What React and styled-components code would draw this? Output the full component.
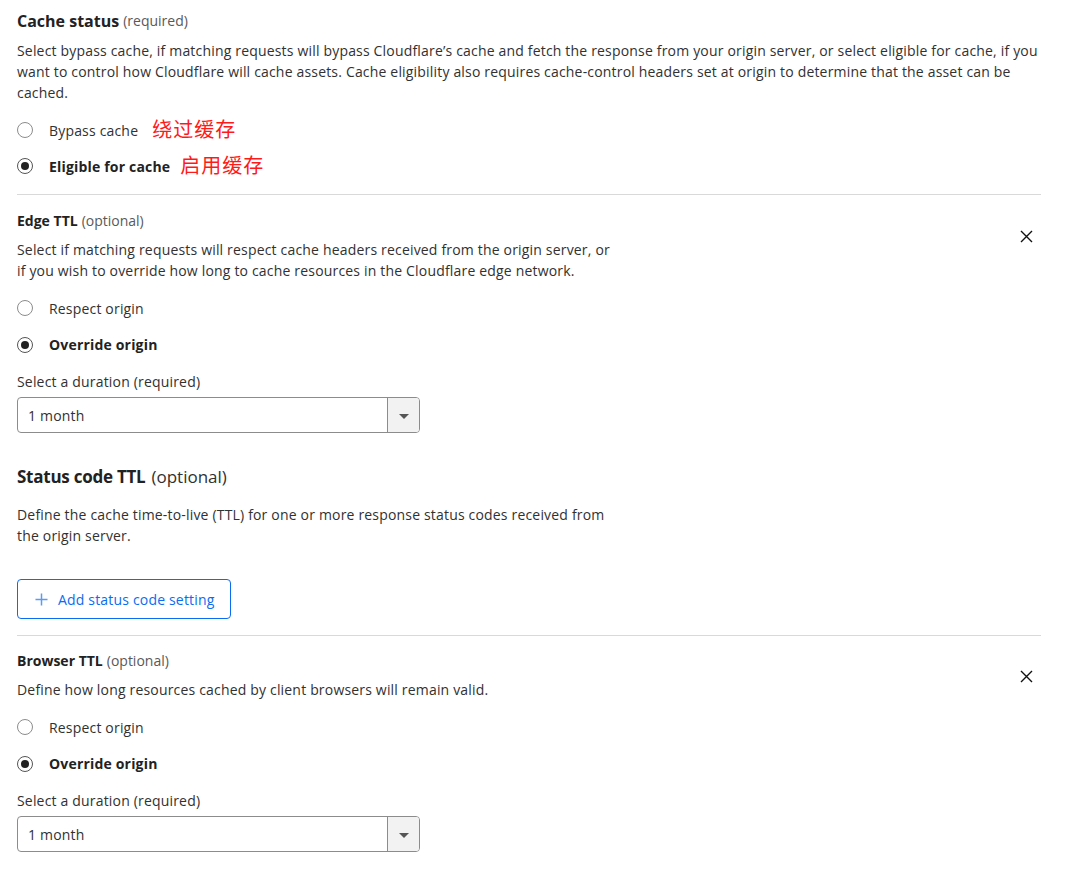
import React from "react";
import styled, { createGlobalStyle } from "styled-components";

const Global = createGlobalStyle`
  html, body { margin: 0; padding: 0; background: #fff; }
  body {
    font-family: "Open Sans", "Noto Sans", "Noto Sans CJK SC", sans-serif;
    color: #313131;
    letter-spacing: 0.18px;
    -webkit-font-smoothing: antialiased;
  }
  * { box-sizing: border-box; }
`;

const Page = styled.div`
  width: 1024px;
  margin-left: 17px;
  padding-top: 10px;
  display: flex;
  flex-direction: column;
`;

const Section = styled.section`
  display: grid;
  grid-template-columns: 1fr auto;
  padding: ${(p) => p.$pad || "0"};
`;

const Content = styled.div`
  display: flex;
  flex-direction: column;
`;

const Title = styled.div`
  font-size: ${(p) => (p.$large ? "17px" : p.$mid ? "16px" : "14px")};
  line-height: ${(p) => (p.$large ? "24px" : "22px")};
  height: ${(p) => (p.$large ? "24px" : p.$mid ? "22px" : "20px")};
  display: flex;
  align-items: center;
  gap: ${(p) => (p.$large ? "6px" : "4px")};
  b {
    font-weight: 700;
    color: #222;
    letter-spacing: ${(p) => (p.$large ? "-0.25px" : "0")};
  }
  span {
    font-weight: 400;
    color: ${(p) => (p.$large ? "#313131" : "#595959")};
    font-size: ${(p) => (p.$large ? "17px" : "14px")};
    letter-spacing: 0;
  }
`;

const Desc = styled.p`
  margin: ${(p) => p.$m || "8px 0 0"};
  font-size: 14px;
  line-height: 21px;
  max-width: ${(p) => p.$w || "none"};
  color: #313131;
`;

const Radios = styled.div`
  display: flex;
  flex-direction: column;
  margin-top: ${(p) => p.$mt || "9px"};
`;

const RadioRow = styled.label`
  display: flex;
  align-items: center;
  height: ${(p) => p.$h || "36.5px"};
  font-size: 14px;
  font-weight: ${(p) => (p.$checked ? 700 : 400)};
  color: ${(p) => (p.$checked ? "#222" : "#313131")};
`;

const Circle = styled.span`
  width: 16px;
  height: 16px;
  border-radius: 50%;
  border: 1px solid ${(p) => (p.$checked ? "#555" : "#8c8c8c")};
  margin-right: 16px;
  display: flex;
  align-items: center;
  justify-content: center;
  flex-shrink: 0;
  &::after {
    content: "";
    width: 8px;
    height: 8px;
    border-radius: 50%;
    background: #222;
    display: ${(p) => (p.$checked ? "block" : "none")};
  }
`;

const Note = styled.span`
  font-family: "Noto Sans CJK SC", sans-serif;
  color: #ff1a1a;
  font-size: 20px;
  letter-spacing: 1px;
  font-weight: 400;
  margin-left: ${(p) => p.$ml || "14px"};
  position: relative;
  top: -2px;
`;

const Divider = styled.hr`
  border: 0;
  border-top: 1px solid #d9d9d9;
  margin: ${(p) => p.$m || "0"};
  width: 1024px;
`;

const FieldLabel = styled.div`
  font-size: 14px;
  line-height: 20px;
  margin-top: 9px;
`;

const Select = styled.div`
  margin-top: 5px;
  width: 403px;
  height: 36px;
  border: 1px solid #8c8c8c;
  border-radius: 4px;
  display: flex;
  overflow: hidden;
`;

const SelectValue = styled.div`
  flex: 1;
  display: flex;
  align-items: center;
  padding-left: 10px;
  font-size: 14px;
  color: #313131;
`;

const SelectArrow = styled.div`
  width: 32px;
  border-left: 1px solid #8c8c8c;
  background: #f2f2f2;
  display: flex;
  align-items: center;
  justify-content: center;
  &::after {
    content: "";
    border-left: 5px solid transparent;
    border-right: 5px solid transparent;
    border-top: 5px solid #555;
    margin-top: 2px;
  }
`;

const CloseBtn = styled.button`
  background: none;
  border: 0;
  padding: 0;
  margin: ${(p) => p.$m || "0"};
  width: 20px;
  height: 20px;
  display: flex;
  align-items: center;
  justify-content: center;
  cursor: pointer;
  align-self: start;
`;

const AddButton = styled.button`
  align-self: flex-start;
  margin-top: 33px;
  height: 40px;
  padding: 0 15px 0 17px;
  border: 1px solid #0a6cf0;
  border-radius: 4px;
  background: #fff;
  color: #0a6cf0;
  font-family: inherit;
  font-size: 14px;
  letter-spacing: 0.18px;
  display: flex;
  align-items: center;
  gap: 10px;
  cursor: pointer;
`;

const CloseIcon = () => (
  <svg width="13" height="13" viewBox="0 0 13 13">
    <path d="M1 1L12 12M12 1L1 12" stroke="#111" strokeWidth="1.4" />
  </svg>
);

const PlusIcon = () => (
  <svg width="13" height="13" viewBox="0 0 13 13">
    <path d="M6.5 0.5V12.5M0.5 6.5H12.5" stroke="#5b9bf5" strokeWidth="1.5" />
  </svg>
);

const Radio = ({ checked, children, h }) => (
  <RadioRow $checked={checked} $h={h}>
    <Circle $checked={checked} />
    {children}
  </RadioRow>
);

const Duration = () => (
  <>
    <FieldLabel>Select a duration (required)</FieldLabel>
    <Select>
      <SelectValue>1 month</SelectValue>
      <SelectArrow />
    </Select>
  </>
);

export default function App() {
  return (
    <>
      <Global />
      <Page>
        <Section>
          <Content>
            <Title $mid>
              <b>Cache status</b>
              <span>(required)</span>
            </Title>
            <Desc $m="8px 0 0">
              Select bypass cache, if matching requests will bypass Cloudflare’s cache and fetch the response from your origin server, or select eligible for cache, if you want to control how Cloudflare will cache assets. Cache eligibility also requires cache-control headers set at origin to determine that the asset can be cached.
            </Desc>
            <Radios $mt="9px">
              <Radio h="36px">
                Bypass cache<Note>绕过缓存</Note>
              </Radio>
              <Radio checked h="36px">
                Eligible for cache<Note $ml="10px">启用缓存</Note>
              </Radio>
            </Radios>
          </Content>
        </Section>

        <Divider $m="10px 0 16px" />

        <Section>
          <Content>
            <Title>
              <b>Edge TTL</b>
              <span>(optional)</span>
            </Title>
            <Desc $w="600px">
              Select if matching requests will respect cache headers received from the origin server, or if you wish to override how long to cache resources in the Cloudflare edge network.
            </Desc>
            <Radios>
              <Radio>Respect origin</Radio>
              <Radio checked>Override origin</Radio>
            </Radios>
            <Duration />
          </Content>
          <CloseBtn $m="15px 5px 0 0" aria-label="Remove">
            <CloseIcon />
          </CloseBtn>
        </Section>

        <Section $pad="32px 0 0">
          <Content>
            <Title $large>
              <b>Status code TTL</b>
              <span>(optional)</span>
            </Title>
            <Desc $w="600px" $m="15px 0 0">
              Define the cache time-to-live (TTL) for one or more response status codes received from the origin server.
            </Desc>
            <AddButton>
              <PlusIcon />
              Add status code setting
            </AddButton>
          </Content>
        </Section>

        <Divider $m="16px 0 15px" />

        <Section>
          <Content>
            <Title>
              <b>Browser TTL</b>
              <span>(optional)</span>
            </Title>
            <Desc $w="600px">
              Define how long resources cached by client browsers will remain valid.
            </Desc>
            <Radios>
              <Radio>Respect origin</Radio>
              <Radio checked>Override origin</Radio>
            </Radios>
            <Duration />
          </Content>
          <CloseBtn $m="15px 5px 0 0" aria-label="Remove">
            <CloseIcon />
          </CloseBtn>
        </Section>
      </Page>
    </>
  );
}
